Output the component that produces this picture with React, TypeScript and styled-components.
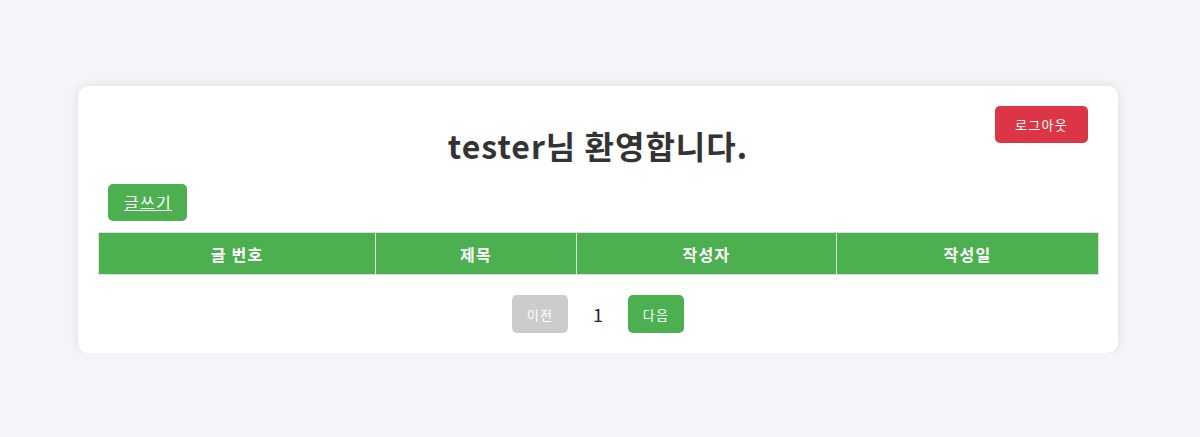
import React from "react";
import styled, { createGlobalStyle } from "styled-components";

const Global = createGlobalStyle`
  html, body { margin: 0; padding: 0; background: #f4f4f9; }
  body { font-family: "Noto Sans CJK KR", "Noto Sans", sans-serif; }
`;

const Page = styled.div`
  display: flex;
  justify-content: center;
  padding: 86px 4px 0 0;
`;

const Card = styled.div`
  position: relative;
  box-sizing: border-box;
  width: 1040px;
  padding: 20px;
  background: #fff;
  border-radius: 10px;
  box-shadow: 0 0 10px rgba(0, 0, 0, 0.1);
`;

const Title = styled.h1`
  margin: 21px 0 20px;
  text-align: center;
  font-size: 32px;
  line-height: 37px;
  font-weight: bold;
  letter-spacing: 1px;
  color: #333;
`;

const LogoutButton = styled.button`
  position: absolute;
  top: 20px;
  right: 30px;
  width: 93px;
  height: 37px;
  border: none;
  border-radius: 5px;
  background: #dc3545;
  color: #fff;
  font-family: inherit;
  font-size: 13px;
  letter-spacing: 1.3px;
  cursor: pointer;
`;

const WriteLink = styled.a`
  display: inline-block;
  margin-left: 10px;
  padding: 8px 15px 8px 16px;
  background: #4caf50;
  color: #fff;
  border-radius: 5px;
  font-size: 16px;
  line-height: 21px;
  letter-spacing: 1.3px;
  text-decoration: underline;
`;

const Table = styled.table`
  width: 100%;
  margin-top: 11px;
  border-collapse: collapse;
  table-layout: fixed;
`;

const Th = styled.th`
  padding: 12px 12px 11px;
  border: 1px solid #ddd;
  background: #4caf50;
  color: #fff;
  font-size: 16px;
  font-weight: bold;
  line-height: 18px;
  letter-spacing: 1.2px;
  text-align: center;
`;

const Pagination = styled.div`
  display: flex;
  justify-content: center;
  align-items: center;
  margin-top: 20px;
`;

const PageButton = styled.button<{ $disabled?: boolean }>`
  width: 56px;
  height: 38px;
  border: none;
  border-radius: 5px;
  background: ${(p) => (p.$disabled ? "#cccccc" : "#4caf50")};
  color: #fff;
  font-family: inherit;
  font-size: 13px;
  letter-spacing: 1.3px;
`;

const PageNum = styled.span`
  margin: 0 25px;
  font-size: 18px;
  color: #222;
`;

const columns = [
  { label: "글 번호", width: 277 },
  { label: "제목", width: 201 },
  { label: "작성자", width: 260 },
  { label: "작성일", width: 262 },
];

export default function App() {
  return (
    <>
      <Global />
      <Page>
        <Card>
          <LogoutButton>로그아웃</LogoutButton>
          <Title>tester님 환영합니다.</Title>
          <WriteLink href="#">글쓰기</WriteLink>
          <Table>
            <colgroup>
              {columns.map((c) => (
                <col key={c.label} style={{ width: c.width }} />
              ))}
            </colgroup>
            <thead>
              <tr>
                {columns.map((c) => (
                  <Th key={c.label}>{c.label}</Th>
                ))}
              </tr>
            </thead>
          </Table>
          <Pagination>
            <PageButton $disabled>이전</PageButton>
            <PageNum>1</PageNum>
            <PageButton>다음</PageButton>
          </Pagination>
        </Card>
      </Page>
    </>
  );
}
